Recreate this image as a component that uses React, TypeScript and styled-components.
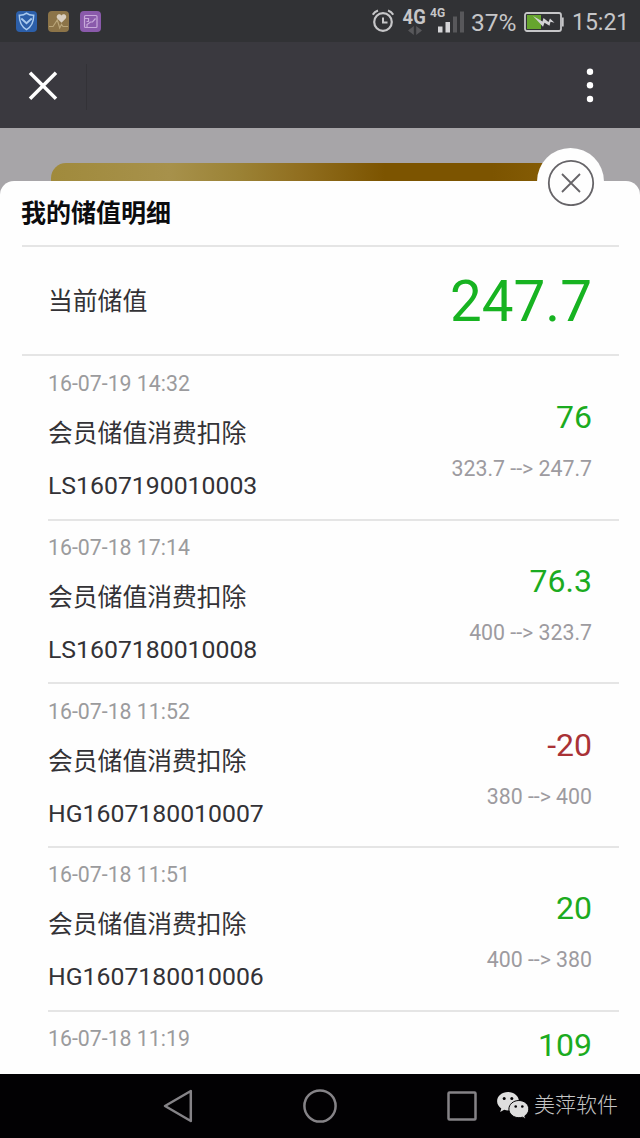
import React from "react";
import styled, { createGlobalStyle } from "styled-components";

const GlobalStyle = createGlobalStyle`
  * { box-sizing: border-box; }
  body {
    margin: 0;
    background: #000;
    font-family: Roboto, "Noto Sans CJK SC", sans-serif;
  }
`;

const Screen = styled.div`
  width: 640px;
  height: 1138px;
  display: flex;
  flex-direction: column;
  overflow: hidden;
`;

const StatusBar = styled.div`
  height: 42px;
  flex: none;
  display: flex;
  align-items: center;
  justify-content: space-between;
  padding: 0 12px 0 16px;
  background: #313235;
  color: #c6c6c8;
`;

const AppIcons = styled.div`
  display: flex;
  gap: 11px;
`;

const StatusInfo = styled.div`
  display: flex;
  align-items: center;
`;

const Network = styled.div`
  display: flex;
  flex-direction: column;
  align-items: center;
  width: 23px;
  margin-left: 9px;
  font-size: 21px;
  line-height: 18px;
  font-weight: 700;
`;

const NetworkLabel = styled.span`
  transform: scaleX(0.88);
`;

const Percent = styled.span`
  width: 47px;
  margin-left: 6px;
  padding-top: 3px;
  font-size: 24.5px;
  line-height: 28px;
`;

const Clock = styled.span`
  width: 56px;
  margin-left: 7px;
  padding-top: 3px;
  font-size: 23px;
  line-height: 28px;
  text-align: right;
`;

const SignalIcon = styled.svg`
  margin-left: 4px;
`;

const BatteryIcon = styled.svg`
  margin-left: 6px;
  margin-right: 1px;
  margin-top: 2px;
`;

const ActionBar = styled.div`
  height: 86px;
  flex: none;
  display: flex;
  align-items: center;
  padding: 0 44px 0 28px;
  background: #3a393f;
`;

const BarDivider = styled.div`
  width: 1px;
  height: 46px;
  margin: 3px auto 0 28px;
  background: #333237;
`;

const Content = styled.main`
  flex: 1;
  min-height: 0;
  display: flex;
  flex-direction: column;
  background: #a7a5a8;
`;

const MemberCard = styled.div`
  flex: none;
  height: 18px;
  margin: 35px 51px 0;
  border-radius: 15px 15px 0 0;
  background: linear-gradient(90deg, #a08a3c 0%, #a7914b 22%, #9b8235 35%, #916f20 46%, #7c5400 62%, #7c5400 82%, #8b6209 100%);
`;

const Sheet = styled.section`
  position: relative;
  flex: 1;
  min-height: 0;
  display: flex;
  flex-direction: column;
  padding: 0 21px 0 22px;
  border-radius: 14px 14px 0 0;
  background: #fefefe;
`;

const CloseButton = styled.button`
  position: absolute;
  top: -33px;
  right: 36px;
  width: 67px;
  height: 67px;
  padding: 0;
  display: flex;
  align-items: center;
  justify-content: center;
  border: 0;
  border-radius: 50%;
  background: #fefefe;
`;

const Title = styled.h1`
  flex: none;
  height: 66px;
  margin: 0;
  border-bottom: 2px solid #e5e5e5;
  font-size: 25px;
  line-height: 65px;
  font-weight: 700;
  text-indent: -1px;
  color: #0c0c0e;
`;

const Balance = styled.div`
  flex: none;
  height: 109px;
  display: flex;
  align-items: center;
  justify-content: space-between;
  padding: 2px 27px 0 26px;
  border-bottom: 2px solid #e5e5e5;
`;

const BalanceLabel = styled.span`
  font-size: 24.8px;
  line-height: 36px;
  color: #333236;
`;

const BalanceValue = styled.span`
  font-size: 56.5px;
  line-height: 64px;
  color: #17b321;
`;

const List = styled.ul`
  flex: 1;
  min-height: 0;
  overflow: hidden;
  margin: 0;
  padding: 1px 0 0 26px;
  list-style: none;
`;

const Item = styled.li`
  height: 163.7px;
  display: flex;
  justify-content: space-between;
  padding-right: 27px;
  border-bottom: 2px solid #e5e5e5;
`;

const Details = styled.div`
  display: flex;
  flex-direction: column;
  padding-top: 13.4px;
`;

const Amounts = styled.div`
  display: flex;
  flex-direction: column;
  align-items: flex-end;
  padding-top: 40.4px;
`;

const LastAmounts = styled(Amounts)`
  padding-top: 13.4px;
`;

const Time = styled.time`
  font-size: 21.3px;
  line-height: 28px;
  color: #9b9b9d;
`;

const Reason = styled.span`
  margin-top: 18px;
  font-size: 24.8px;
  line-height: 36px;
  color: #333236;
`;

const Code = styled.span`
  margin-top: 17px;
  font-size: 24.8px;
  line-height: 34px;
  color: #333236;
`;

const Amount = styled.span<{ $negative?: boolean }>`
  font-size: 32px;
  line-height: 40px;
  color: ${(p) => (p.$negative ? "#a93236" : "#1bab20")};
`;

const Change = styled.span`
  margin-top: 18px;
  font-size: 21.3px;
  line-height: 28px;
  color: #9d9ba0;
`;

const NavBar = styled.nav`
  height: 64px;
  flex: none;
  display: flex;
  align-items: center;
  padding-left: 162px;
  background: #020103;
`;

const NavIcon = styled.svg<{ $gap?: number }>`
  flex: none;
  margin-left: ${(p) => p.$gap ?? 0}px;
`;

const Watermark = styled.div`
  display: flex;
  align-items: center;
  gap: 4px;
  margin: -2px 0 0 18px;
  font-size: 21px;
  line-height: 30px;
  font-weight: 300;
  color: #c4c4c4;
  white-space: nowrap;
`;

interface Entry {
  time: string;
  code?: string;
  amount: string;
  change?: string;
  negative?: boolean;
}

const entries: Entry[] = [
  { time: "16-07-19 14:32", code: "LS1607190010003", amount: "76", change: "323.7 --> 247.7" },
  { time: "16-07-18 17:14", code: "LS1607180010008", amount: "76.3", change: "400 --> 323.7" },
  { time: "16-07-18 11:52", code: "HG1607180010007", amount: "-20", change: "380 --> 400", negative: true },
  { time: "16-07-18 11:51", code: "HG1607180010006", amount: "20", change: "400 --> 380" },
  { time: "16-07-18 11:19", amount: "109" },
];

function EntryRow({ entry }: { entry: Entry }) {
  const Column = entry.code ? Amounts : LastAmounts;
  return (
    <Item>
      <Details>
        <Time>{entry.time}</Time>
        {entry.code && <Reason>会员储值消费扣除</Reason>}
        {entry.code && <Code>{entry.code}</Code>}
      </Details>
      <Column>
        <Amount $negative={entry.negative}>{entry.amount}</Amount>
        {entry.change && <Change>{entry.change}</Change>}
      </Column>
    </Item>
  );
}

export default function App() {
  return (
    <Screen>
      <GlobalStyle />
      <StatusBar>
        <AppIcons>
          <svg width="21" height="21" viewBox="0 0 21 21" fill="none">
            <rect width="21" height="21" rx="4" fill="#2c5fa9" />
            <path d="M10.5 2.2C8.3 4 5.8 4.4 3.3 4.3c0 6 1.6 11.2 7.2 14.3 5.6-3.1 7.2-8.3 7.2-14.3-2.5.1-5-.3-7.2-2.1z" stroke="#a9caee" strokeWidth="1.5" />
            <path d="M5.3 7.5l5.2 4.7 5.2-4.7" stroke="#a9caee" strokeWidth="1.8" />
          </svg>
          <svg width="21" height="21" viewBox="0 0 21 21" fill="none">
            <rect width="21" height="21" rx="4" fill="#8c7448" />
            <path d="M13.5 11.8L9.3 7.5C7.2 4.500 11.5 1.6 13.5 4.5c2-2.9 6.3 0 4.200 3z" fill="#d9cfc0" />
            <path d="M1 15.500h4l2-3 2.300-3.500 2.400 8 1.800-3.500 1.500 2h5" stroke="#b9a579" strokeWidth="1.2" />
          </svg>
          <svg width="21" height="21" viewBox="0 0 21 21" fill="none">
            <rect width="21" height="21" rx="4" fill="#8a5aab" />
            <rect x="4.5" y="4.5" width="12.5" height="12" rx="1" stroke="#c7a8da" strokeWidth="1.2" />
            <path d="M4.5 7.5h4v3h-2M7 16v-2.500l3.500-2.500h2l3-3.500" stroke="#c7a8da" strokeWidth="1.2" />
          </svg>
        </AppIcons>
        <StatusInfo>
          <svg width="22" height="24" viewBox="0 0 22 24" fill="none" stroke="#c6c6c8">
            <circle cx="11" cy="13" r="8.8" strokeWidth="2.2" />
            <path d="M11 8.500v5h4.500" strokeWidth="2" />
            <path d="M.8 5.700Q2.500 2.800 6 1.500M21.200 5.700Q19.500 2.800 16 1.500" strokeWidth="2" />
          </svg>
          <Network>
            <NetworkLabel>4G</NetworkLabel>
            <svg width="14" height="9" viewBox="0 0 14 9" fill="#58585b">
              <path d="M5.8 0v9L0 4.500zM8.200 0v9L14 4.500z" />
            </svg>
          </Network>
          <SignalIcon width="35" height="28" viewBox="0 0 35 28">
            <text x="0" y="10" fontSize="12" fontWeight="700" fill="#c6c6c8" fontFamily="Roboto, sans-serif">4G</text>
            <rect x="8" y="19.5" width="4.500" height="6" fill="#d5d5d7" />
            <rect x="15.5" y="15" width="4.500" height="10.5" fill="#d5d5d7" />
            <rect x="23" y="9.5" width="4" height="16" fill="#58585b" />
            <rect x="30" y="4.5" width="4" height="21" fill="#58585b" />
          </SignalIcon>
          <Percent>37%</Percent>
          <BatteryIcon width="40" height="22" viewBox="0 0 40 22">
            <rect x="1" y="2" width="36" height="18" rx="2" fill="none" stroke="#c6c6c8" strokeWidth="1.8" />
            <path d="M38 6.500h1.700v9H38z" fill="#c6c6c8" />
            <rect x="3" y="4" width="14" height="14" fill="#66a52e" />
            <path d="M9 5l9.500 5.500 1-3.500 5 4 1.500-3.500 4.500 4.300-4-1.100-1 4.100-5-3-1.500 4z" fill="#d3d3d5" />
          </BatteryIcon>
          <Clock>15:21</Clock>
        </StatusInfo>
      </StatusBar>

      <ActionBar>
        <svg width="30" height="30" viewBox="0 0 30 30" stroke="#fff" strokeWidth="3.5">
          <path d="M2 2.700l26 26M28 2.700L2 28.700" />
        </svg>
        <BarDivider />
        <svg width="12" height="36" viewBox="0 0 12 36" fill="#fff">
          <circle cx="6" cy="4.8" r="3.2" />
          <circle cx="6" cy="18.3" r="3.2" />
          <circle cx="6" cy="32" r="3.2" />
        </svg>
      </ActionBar>

      <Content>
        <MemberCard />
        <Sheet>
          <CloseButton aria-label="关闭">
            <svg width="48" height="48" viewBox="0 0 48 48" fill="none" stroke="#666468">
              <circle cx="24" cy="25" r="22.2" strokeWidth="1.8" />
              <path d="M15 16l18 18M33 16L15 34" strokeWidth="1.8" />
            </svg>
          </CloseButton>
          <Title>我的储值明细</Title>
          <Balance>
            <BalanceLabel>当前储值</BalanceLabel>
            <BalanceValue>247.7</BalanceValue>
          </Balance>
          <List>
            {entries.map((entry) => (
              <EntryRow key={entry.time} entry={entry} />
            ))}
          </List>
        </Sheet>
      </Content>

      <NavBar>
        <NavIcon width="32" height="36" viewBox="0 0 32 36" fill="none" stroke="#858387" strokeWidth="2.5" strokeLinejoin="round">
          <path d="M28.8 3v30L3 18z" />
        </NavIcon>
        <NavIcon $gap={108} width="36" height="36" viewBox="0 0 36 36" fill="none" stroke="#858387" strokeWidth="2.5">
          <circle cx="18" cy="18" r="15.6" />
        </NavIcon>
        <NavIcon $gap={108} width="32" height="32" viewBox="0 0 32 32" fill="none" stroke="#858387" strokeWidth="2.5">
          <rect x="2.5" y="2.5" width="27" height="27" rx="1" />
        </NavIcon>
        <Watermark>
          <svg width="34" height="28" viewBox="0 0 33 28">
            <path d="M11.5 1C5.4 1 .6 5.1.6 10.2c0 3 1.700 5.500 4.200 7.200L3.700 21l4-2.200c1.200.4 2.500.6 3.800.6 6 0 10.900-4.100 10.900-9.200S17.500 1 11.500 1z" fill="#dedede" />
            <path d="M22.400 9.500c-5.600 0-10 3.800-10 8.600s4.400 8.600 10 8.600c1.200 0 2.400-.2 3.500-.5l3.400 1.700-1-3c2.500-1.600 4-4 4-6.800 0-4.800-4.400-8.600-9.900-8.600z" fill="#dedede" stroke="#020103" strokeWidth="1" />
            <g fill="#020103">
              <circle cx="7.700" cy="7.600" r="1.500" />
              <circle cx="15.300" cy="7.600" r="1.500" />
              <circle cx="19.200" cy="15.500" r="1.300" />
              <circle cx="25.800" cy="15.500" r="1.300" />
            </g>
          </svg>
          <span>美萍软件</span>
        </Watermark>
      </NavBar>
    </Screen>
  );
}
